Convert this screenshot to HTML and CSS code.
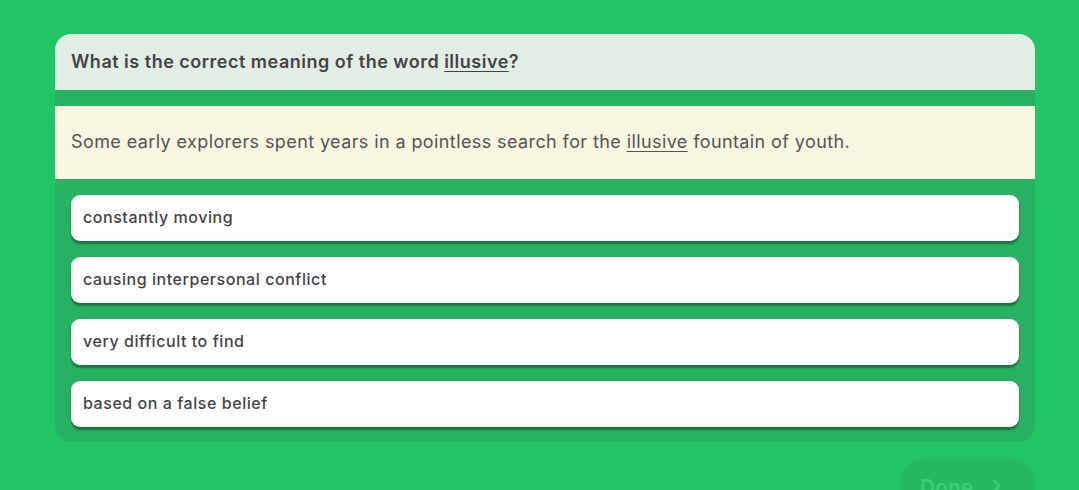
FILE: index.html
```html
<!DOCTYPE html>
<html lang="en">
<head>
<meta charset="utf-8">
<title>Vocabulary question</title>
<link rel="stylesheet" href="styles.css">
</head>
<body>
<main class="page">
  <section class="card">
    <header class="question"><span>What is the correct meaning of the word <u>illusive</u>?</span></header>
    <p class="sentence"><span>Some early explorers spent years in a pointless search for the <u>illusive</u> fountain of youth.</span></p>
    <ul class="options">
      <li class="option">constantly moving</li>
      <li class="option">causing interpersonal conflict</li>
      <li class="option">very difficult to find</li>
      <li class="option">based on a false belief</li>
    </ul>
  </section>
  <div class="actions">
    <button class="done">Done <span class="chev">&#x203A;</span></button>
  </div>
</main>
</body>
</html>
```
FILE: styles.css
```css
html, body {
  margin: 0;
  padding: 0;
}
body {
  background: #22c565;
  font-family: Inter, "Open Sans", sans-serif;
  color: #444;
  overflow: hidden;
  height: 490px;
}
.page {
  padding: 34px 44px 0 55px;
}
.card {
  width: 980px;
  background: #27b263;
  border-radius: 16px;
  overflow: hidden;
  padding-bottom: 15px;
}
.question {
  background: #e2eee5;
  height: 56px;
  display: flex;
  align-items: center;
  padding: 0 16px 2px;
  box-sizing: border-box;
  font-size: 18px;
  letter-spacing: 0.5px;
  font-weight: 600;
  color: #444;
}
.sentence {
  margin: 16px 0 0;
  background: #f7f6e1;
  height: 73px;
  box-sizing: border-box;
  display: flex;
  align-items: center;
  padding: 0 16px 2px;
  font-size: 18px;
  letter-spacing: 0.4px;
  font-weight: 400;
  color: #555;
}
.sentence u, .question u {
  text-underline-offset: 3px;
  text-decoration-thickness: 1px;
}
.options {
  list-style: none;
  margin: 16px 16px 0;
  padding: 0;
  display: flex;
  flex-direction: column;
  gap: 16px;
}
.option {
  background: #fff;
  height: 46px;
  box-sizing: border-box;
  border-radius: 9px;
  display: flex;
  align-items: center;
  padding: 0 12px 2px;
  font-size: 16px;
  letter-spacing: 0.55px;
  font-weight: 500;
  color: #444;
  box-shadow: 0 3px 2px rgba(0, 0, 0, 0.35);
}
.actions {
  display: flex;
  justify-content: flex-end;
  width: 980px;
  margin-top: 17px;
}
.done {
  width: 135px;
  height: 31px;
  overflow: hidden;
  border: none;
  border-radius: 24px 24px 0 0;
  background: #26b862;
  color: #3ccd78;
  font-family: inherit;
  font-size: 21px;
  font-weight: 600;
  padding: 16px 0 0 4px;
  display: flex;
  justify-content: flex-start;
  padding-left: 20px;
  align-items: flex-start;
  gap: 18px;
}
.chev {
  font-size: 26px;
  line-height: 20px;
}
```
